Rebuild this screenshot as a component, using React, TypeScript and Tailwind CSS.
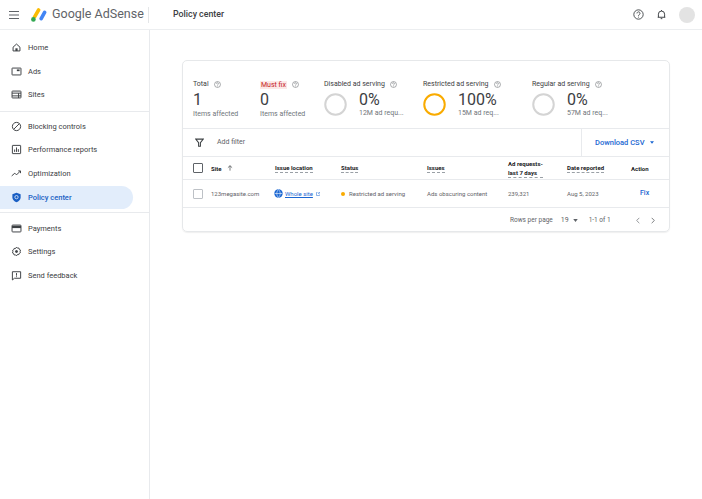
import React from 'react';

const navIcons: Record<string, React.ReactNode> = {
  home: <><path d="M3 7.5 8 3l5 4.5V13H3V7.5Z" /><rect x="6.4" y="9.2" width="3.2" height="3.8" fill="currentColor" stroke="none" /></>,
  ads: <><rect x="1.5" y="3" width="13" height="10" rx="0.5" /><rect x="8.5" y="5" width="4" height="2.5" fill="currentColor" stroke="none" /></>,
  sites: <><rect x="1.5" y="3" width="13" height="10" rx="0.8" /><path d="M1.5 6h13M1.5 10h13M11 6v7" /></>,
  block: <><circle cx="8" cy="8" r="6" /><path d="M3.8 12.2 12.2 3.8" /></>,
  perf: <><rect x="2" y="2" width="12" height="12" rx="0.5" /><path d="M5.3 11.5V8M8 11.5V5M10.7 11.5V7.5" /></>,
  opt: <path d="M1 11.5 5.5 7.5l2.5 2.5 5.5-5.5M10.5 4.2h3.3v3.3" />,
  pay: <><rect x="1.5" y="3" width="13" height="10" rx="1" /><rect x="1.5" y="4" width="13" height="3.4" fill="currentColor" stroke="none" /></>,
  settings: <><path d="M8 1.6l1.4 1.5 2-.2.6 1.9 1.8 1-.6 1.9.6 1.9-1.8 1-.6 1.9-2-.2L8 14.4l-1.4-1.5-2 .2-.6-1.9-1.8-1 .6-1.9-.6-1.9 1.8-1 .6-1.9 2 .2L8 1.6Z" /><circle cx="8" cy="8" r="1.5" fill="currentColor" /></>,
  feedback: <><path d="M2 2.5h12v9.5H5L2 14.5V2.5Z" /><path d="M8 4.5v3.7M8 9.2v1.2" /></>,
};

const NavItem = ({ icon, label }: { icon: string; label: string }) => (
  <div className="flex items-center h-[23.5px] pl-[11px] gap-[6px] text-[#3c4043]">
    <svg viewBox="0 0 16 16" className="w-[11px] h-[11px] shrink-0" fill="none" stroke="currentColor" strokeWidth="1.4">
      {navIcons[icon]}
    </svg>
    <span className="text-[7.5px] leading-none">{label}</span>
  </div>
);

const Help = () => (
  <svg viewBox="0 0 16 16" className="w-[7px] h-[7px] shrink-0 text-[#5f6368]" fill="none" stroke="currentColor" strokeWidth="1.2">
    <circle cx="8" cy="8" r="6.8" />
    <path d="M5.8 6.4a2.2 2.2 0 1 1 3.4 1.8c-.8.5-1.2 1-1.2 1.8M8 11.2v1.2" />
  </svg>
);

const Ring = ({ color }: { color: string }) => (
  <svg viewBox="0 0 24 24" className="w-[23px] h-[23px] shrink-0" fill="none" stroke={color} strokeWidth="2.1">
    <circle cx="12" cy="12" r="10.7" />
  </svg>
);

const Serving = ({ title, value, sub, color, w }: { title: string; value: string; sub: string; color: string; w: string }) => (
  <div className={w}>
    <div className="flex items-center gap-[5px] h-[9px] text-[7px] text-[#3c4043] whitespace-nowrap">
      {title} <Help />
    </div>
    <div className="flex items-center gap-[12px] mt-[2px]">
      <Ring color={color} />
      <div>
        <div className="text-[16px] leading-[17px] text-[#3c4043]">{value}</div>
        <div className="text-[7px] leading-[9px] mt-[1px] text-[#70757a] whitespace-nowrap">{sub}</div>
      </div>
    </div>
  </div>
);

const Count = ({ value, w, children }: { value: string; w: string; children: React.ReactNode }) => (
  <div className={w}>
    <div className="flex items-center gap-[5px] h-[9px] text-[7px] text-[#3c4043]">{children} <Help /></div>
    <div className="text-[16px] leading-[17px] mt-[2px] text-[#3c4043]">{value}</div>
    <div className="text-[7px] leading-[9px] mt-[2px] text-[#70757a] whitespace-nowrap">Items affected</div>
  </div>
);

const Th = ({ children }: { children: React.ReactNode }) => (
  <span className="inline-block font-bold text-[#202124] border-b border-dashed border-[#9aa0a6]">{children}</span>
);

const gridCols = 'grid grid-cols-[18px_64px_66px_86px_81px_59px_64px_38px] items-center pl-[10px]';

export default function App() {
  return (
    <div className="w-[702px] h-[499px] bg-white overflow-hidden flex flex-col" style={{ fontFamily: 'Roboto, sans-serif' }}>
      {/* Top bar */}
      <header className="h-[30px] shrink-0 flex items-center border-b border-[#eceef0] pl-[9px] pr-[7px]">
        <svg viewBox="0 0 10 8" className="w-[10px] h-[8px] text-[#5f6368]" fill="currentColor">
          <rect width="10" height="1" /><rect y="3.5" width="10" height="1" /><rect y="7" width="10" height="1" />
        </svg>
        <svg viewBox="0 0 16 14" className="w-[16px] h-[14px] ml-[12px]">
          <path d="M7.6 2 3.6 8.8" stroke="#fbbc04" strokeWidth="3.6" strokeLinecap="round" />
          <path d="M13.6 4.4 10.2 10.6" stroke="#4285f4" strokeWidth="3.6" strokeLinecap="round" />
          <circle cx="2.4" cy="11.4" r="2.3" fill="#34a853" />
        </svg>
        <span className="ml-[5px] w-[84px] text-[12.5px] text-[#5f6368] leading-none whitespace-nowrap">Google AdSense</span>
        <div className="w-px h-[16px] bg-[#e4e6e8] ml-[12px]" />
        <span className="ml-[24px] text-[8.8px] font-medium text-[#3c4043]">Policy center</span>
        <div className="ml-auto flex items-center">
          <svg viewBox="0 0 16 16" className="w-[11px] h-[11px] text-[#3c4043]" fill="none" stroke="currentColor" strokeWidth="1.3">
            <circle cx="8" cy="8" r="6.8" />
            <path d="M5.8 6.4a2.2 2.2 0 1 1 3.4 1.8c-.8.5-1.2 1-1.2 1.8M8 11.2v1.2" />
          </svg>
          <svg viewBox="0 0 16 16" className="w-[11px] h-[11px] ml-[12px] text-[#3c4043]" fill="none" stroke="currentColor" strokeWidth="1.4">
            <path d="M3.5 12V7.5a4.5 4.5 0 0 1 9 0V12M2.5 12h11M6.8 14h2.4M8 1.5V3" />
          </svg>
          <div className="w-[16px] h-[16px] rounded-full bg-[#e3e3e3] ml-[12px]" />
        </div>
      </header>

      <div className="flex flex-1 min-h-0">
        {/* Sidebar */}
        <aside className="w-[150px] shrink-0 border-r border-[#e8eaed] pt-[6px]">
          <NavItem icon="home" label="Home" />
          <NavItem icon="ads" label="Ads" />
          <NavItem icon="sites" label="Sites" />
          <div className="border-t border-[#e8eaed] mt-[4px] mb-[3px]" />
          <NavItem icon="block" label="Blocking controls" />
          <NavItem icon="perf" label="Performance reports" />
          <NavItem icon="opt" label="Optimization" />
          <div className="flex items-center h-[23px] w-[133px] pl-[11px] gap-[6px] rounded-r-full bg-[#e2edfb] text-[#1a5fc4] mt-[1px]">
            <svg viewBox="0 0 16 16" className="w-[11px] h-[11px] shrink-0">
              <path d="M8 1 14 3.2v4.6c0 3.4-2.6 6-6 7.2-3.4-1.2-6-3.8-6-7.2V3.2L8 1Z" fill="#1a5fc4" />
              <circle cx="8" cy="7.5" r="2.4" fill="none" stroke="#e2edfb" strokeWidth="1.2" />
            </svg>
            <span className="text-[7.5px] leading-none font-medium">Policy center</span>
          </div>
          <div className="border-t border-[#e8eaed] mt-[3px] mb-[3.5px]" />
          <NavItem icon="pay" label="Payments" />
          <NavItem icon="settings" label="Settings" />
          <NavItem icon="feedback" label="Send feedback" />
        </aside>

        {/* Content */}
        <main className="flex-1 pl-[32px] pt-[30px]">
          <div className="w-[488px] rounded-[5px] border border-[#e6e8ea] shadow-[0_1px_1px_rgba(60,64,67,0.08)]">
            {/* Summary */}
            <div className="h-[68px] flex pl-[10px] pt-[19px] border-b border-[#e8eaed]">
              <Count value="1" w="w-[67px]">Total</Count>
              <Count value="0" w="w-[64px]">
                <span className="bg-[#fce8e6] text-[#c5221f] px-[1px] text-[7px] leading-[8px]">Must fix</span>
              </Count>
              <Serving title="Disabled ad serving" value="0%" sub="12M ad requ..." color="#d4d4d4" w="w-[99px]" />
              <Serving title="Restricted ad serving" value="100%" sub="15M ad req..." color="#f9ab00" w="w-[109px]" />
              <Serving title="Regular ad serving" value="0%" sub="57M ad req..." color="#d4d4d4" w="w-[100px]" />
            </div>
            {/* Filter row */}
            <div className="h-[28px] flex items-center border-b border-[#e8eaed]">
              <svg viewBox="0 0 12 12" className="w-[9px] h-[9px] ml-[12px] text-[#3c4043]" fill="none" stroke="currentColor" strokeWidth="1.4">
                <path d="M1 1.5h10L7.2 6.4V11H4.8V6.4L1 1.5Z" />
              </svg>
              <span className="ml-[13px] text-[7px] text-[#5f6368]">Add filter</span>
              <div className="ml-auto h-full w-[88px] border-l border-[#e8eaed] flex items-center pl-[13px] text-[#1a66d2]">
                <span className="text-[7.5px] font-medium">Download CSV</span>
                <svg viewBox="0 0 6 4" className="w-[4px] h-[3px] ml-[6px]" fill="currentColor"><path d="M0 0h6L3 4Z" /></svg>
              </div>
            </div>
            {/* Table head */}
            <div className={`${gridCols} h-[23px] border-b border-[#e8eaed] text-[6px] leading-[9px]`}>
              <div className="w-[10px] h-[10px] border border-[#5f6368] rounded-[1px]" />
              <div className="flex items-center gap-[5px]">
                <span className="font-bold text-[#202124]">Site</span>
                <svg viewBox="0 0 8 8" className="w-[6px] h-[6px] text-[#3c4043]" fill="none" stroke="currentColor" strokeWidth="0.9"><path d="M4 7.5V1M1.2 3.6 4 .9l2.8 2.7" /></svg>
              </div>
              <div><Th>Issue location</Th></div>
              <div><Th>Status</Th></div>
              <div><Th>Issues</Th></div>
              <div><Th>Ad requests-<br />last 7 days</Th></div>
              <div><Th>Date reported</Th></div>
              <div className="font-bold text-[#202124]">Action</div>
            </div>
            {/* Table row */}
            <div className={`${gridCols} h-[28px] border-b border-[#e8eaed] text-[6px] text-[#5f6368]`}>
              <div className="w-[10px] h-[10px] border border-[#bdc1c6] rounded-[1px]" />
              <div>123megasite.com</div>
              <div className="flex items-center gap-[2px] text-[#1a66d2] -ml-[1px]">
                <svg viewBox="0 0 16 16" className="w-[9px] h-[9px]" fill="none" stroke="currentColor" strokeWidth="1.3">
                  <circle cx="8" cy="8" r="7.5" fill="#1a66d2" stroke="none" />
                  <path d="M1 8h14M8 1c-4 4-4 10 0 14M8 1c4 4 4 10 0 14" stroke="#ffffff" strokeWidth="1" />
                </svg>
                <span className="underline">Whole site</span>
                <svg viewBox="0 0 8 8" className="w-[4px] h-[4px] ml-[1px]" fill="none" stroke="currentColor"><path d="M3 1H1v6h6V5M4 4l3-3M5 1h2v2" /></svg>
              </div>
              <div className="flex items-center gap-[4px]">
                <span className="w-[4px] h-[4px] rounded-full bg-[#f9ab00]" />
                Restricted ad serving
              </div>
              <div>Ads obscuring content</div>
              <div>239,321</div>
              <div>Aug 5, 2023</div>
              <div className="pl-[9px] text-[7px] font-medium text-[#1a66d2]">Fix</div>
            </div>
            {/* Pagination */}
            <div className="h-[23px] flex items-center text-[6.5px] text-[#5f6368] pl-[327px] pt-[2px]">
              <span>Rows per page</span>
              <span className="ml-[8px] text-[7px]">19</span>
              <svg viewBox="0 0 6 4" className="w-[5px] h-[3px] ml-[4px]" fill="currentColor"><path d="M0 0h6L3 4Z" /></svg>
              <span className="ml-[11px]">1-1 of 1</span>
              <svg viewBox="0 0 6 10" className="w-[4px] h-[7px] ml-[25px] text-[#5f6368]" fill="none" stroke="currentColor" strokeWidth="1"><path d="M5 1 1 5l4 4" /></svg>
              <svg viewBox="0 0 6 10" className="w-[4px] h-[7px] ml-[11px] text-[#3c4043]" fill="none" stroke="currentColor" strokeWidth="1"><path d="m1 1 4 4-4 4" /></svg>
            </div>
          </div>
        </main>
      </div>
    </div>
  );
}
